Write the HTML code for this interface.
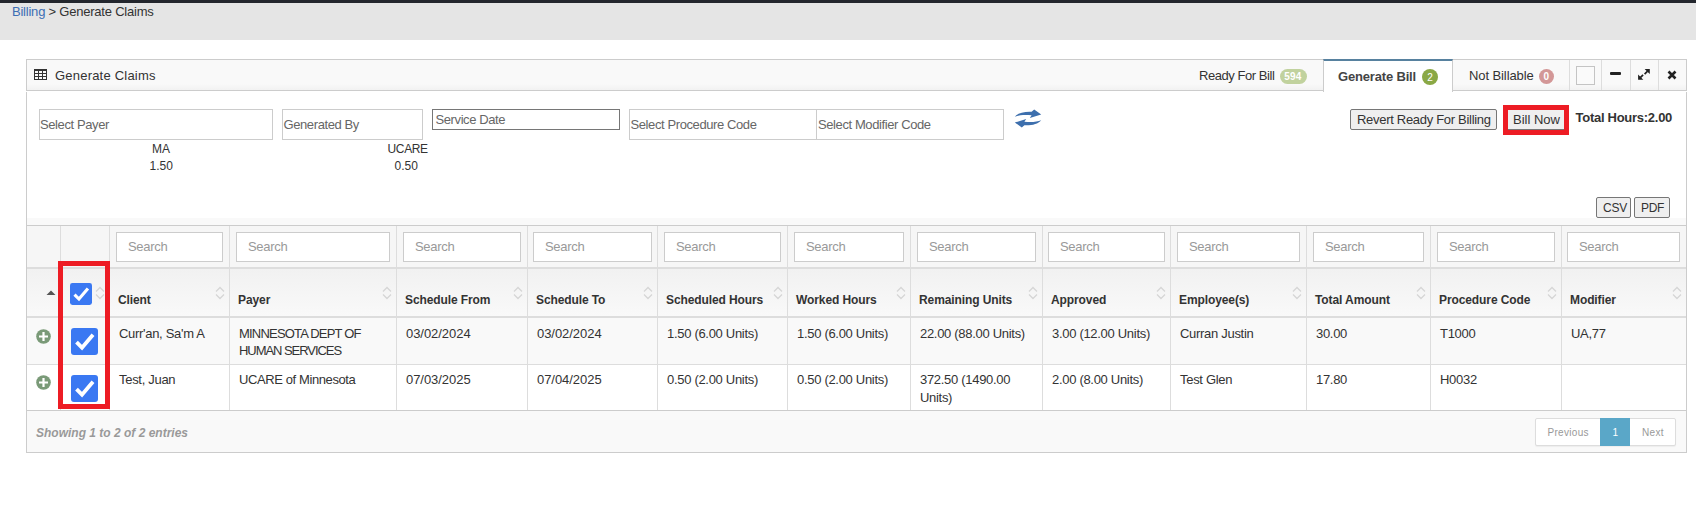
<!DOCTYPE html>
<html><head><meta charset="utf-8"><title>Generate Claims</title>
<style>
html,body{margin:0;padding:0;background:#fff;width:1696px;height:511px;overflow:hidden}
body{position:relative;font-family:"Liberation Sans",sans-serif}
.t{position:absolute;white-space:nowrap;line-height:20px}
.r{position:absolute}
</style></head><body>
<div class="r" style="left:0px;top:0px;width:1696px;height:3px;background:#23262d"></div>
<div class="r" style="left:0px;top:3px;width:1696px;height:37px;background:#e5e5e5"></div>
<div class="t" style="left:12px;top:1.70px;font-size:13px;font-weight:normal;color:#333;letter-spacing:-0.22px;font-style:normal;"><span style="color:#3d6eb4">Billing</span> &gt; Generate Claims</div>
<div class="r" style="left:26px;top:59px;width:1661px;height:32px;background:#f9f9f9;border:1px solid #ccc;box-sizing:border-box;background-image:linear-gradient(#f9f9f9 0,#f9f9f9 80%,#f2f2f2 100%)"></div>
<svg class="r" style="left:34px;top:69px" width="13" height="11" viewBox="0 0 13 11"><rect x="0.5" y="0.5" width="12" height="10" fill="none" stroke="#333"/><rect x="0" y="0" width="13" height="2" fill="#333"/><path d="M4.5 2V11M8.5 2V11M0 4.5H13M0 7.5H13" stroke="#333" stroke-width="1"/></svg>
<div class="t" style="left:55px;top:66.30px;font-size:13px;font-weight:normal;color:#333;letter-spacing:0.21px;font-style:normal;">Generate Claims</div>
<div class="r" style="left:1323px;top:59px;width:130px;height:33px;background:#fff;border-left:1px solid #ccc;border-right:1px solid #ccc;border-top:2px solid #57819f;box-sizing:border-box"></div>
<div class="t" style="left:1199px;top:65.70px;font-size:13px;font-weight:normal;color:#333;letter-spacing:-0.45px;font-style:normal;">Ready For Bill</div>
<div class="r" style="left:1280px;top:69px;width:27px;height:15px;background:#c1d29e;border-radius:8px"></div>
<div class="t" style="left:1284.3px;top:66.69px;font-size:10px;font-weight:bold;color:#fff;letter-spacing:0.2px;font-style:normal;">594</div>
<div class="t" style="left:1338px;top:66.50px;font-size:13px;font-weight:bold;color:#444;letter-spacing:-0.17px;font-style:normal;">Generate Bill</div>
<div class="r" style="left:1422px;top:69px;width:16px;height:16px;background:#8aa845;border-radius:50%"></div>
<div class="t" style="left:1427.3px;top:67.69px;font-size:10px;font-weight:normal;color:#fff;letter-spacing:0px;font-style:normal;">2</div>
<div class="t" style="left:1469px;top:65.70px;font-size:13px;font-weight:normal;color:#333;letter-spacing:-0.09px;font-style:normal;">Not Billable</div>
<div class="r" style="left:1539px;top:69px;width:15px;height:15px;background:#d39797;border-radius:50%"></div>
<div class="t" style="left:1543.6px;top:66.69px;font-size:10px;font-weight:bold;color:#fff;letter-spacing:0px;font-style:normal;">0</div>
<div class="r" style="left:1569px;top:60px;width:1px;height:30px;background:#ddd"></div>
<div class="r" style="left:1601px;top:60px;width:1px;height:30px;background:#ddd"></div>
<div class="r" style="left:1630px;top:60px;width:1px;height:30px;background:#ddd"></div>
<div class="r" style="left:1658px;top:60px;width:1px;height:30px;background:#ddd"></div>
<div class="r" style="left:1576px;top:66px;width:19px;height:19px;border:1px solid #c4c4c4;box-sizing:border-box;background:#fafafa"></div>
<div class="r" style="left:1610px;top:72px;width:11px;height:3px;background:#222;border-radius:1px"></div>
<svg class="r" style="left:1637px;top:68px" width="14" height="13" viewBox="0 0 14 13"><path d="M7.6 0.9H12.8V6.1Z M1.1 6.6V11.8H6.3Z" fill="#222"/><path d="M10.6 3.1L7.6 6.1M3.3 9.6L6.1 6.8" stroke="#222" stroke-width="1.7"/></svg>
<svg class="r" style="left:1667px;top:70px" width="10" height="10" viewBox="0 0 10 10"><path d="M1.5 1.5L8.5 8.5M8.5 1.5L1.5 8.5" stroke="#222" stroke-width="2.6"/></svg>
<div class="r" style="left:26px;top:92px;width:1px;height:361px;background:#ccc"></div>
<div class="r" style="left:1686px;top:92px;width:1px;height:361px;background:#ccc"></div>
<div class="r" style="left:39px;top:109px;width:234px;height:31px;border:1px solid #ccc;box-sizing:border-box;background:#fff"></div>
<div class="t" style="left:40px;top:114.70px;font-size:13px;font-weight:normal;color:#666;letter-spacing:-0.4px;font-style:normal;">Select Payer</div>
<div class="r" style="left:282px;top:109px;width:141px;height:31px;border:1px solid #ccc;box-sizing:border-box;background:#fff"></div>
<div class="t" style="left:283.5px;top:114.70px;font-size:13px;font-weight:normal;color:#666;letter-spacing:-0.4px;font-style:normal;">Generated By</div>
<div class="r" style="left:432px;top:109px;width:188px;height:21px;border:1px solid #767676;box-sizing:border-box;background:#fff"></div>
<div class="t" style="left:435.5px;top:109.70px;font-size:13px;font-weight:normal;color:#666;letter-spacing:-0.4px;font-style:normal;">Service Date</div>
<div class="r" style="left:629px;top:109px;width:188px;height:31px;border:1px solid #ccc;box-sizing:border-box;background:#fff"></div>
<div class="t" style="left:630.5px;top:115.20px;font-size:13px;font-weight:normal;color:#666;letter-spacing:-0.4px;font-style:normal;">Select Procedure Code</div>
<div class="r" style="left:816px;top:109px;width:188px;height:31px;border:1px solid #ccc;box-sizing:border-box;background:#fff"></div>
<div class="t" style="left:818px;top:115.20px;font-size:13px;font-weight:normal;color:#666;letter-spacing:-0.4px;font-style:normal;">Select Modifier Code</div>
<svg class="r" style="left:1014px;top:109px" width="28" height="19" viewBox="0 0 28 19"><path d="M0.8 7.7C4 3.8 10 2.4 17.6 2.7L20.2 0.5L27.2 5.5L15.8 9L17.6 6.3C11 5.6 5 6 0.8 7.7Z" fill="#3d6fad"/><path d="M27.2 11.3C24 15.2 18 16.6 10.4 16.3L7.8 18.5L0.8 13.5L12.2 10L10.4 12.7C17 13.4 23 13 27.2 11.3Z" fill="#3d6fad"/></svg>
<div class="t" style="left:152px;top:139.03px;font-size:12px;font-weight:normal;color:#333;letter-spacing:0px;font-style:normal;">MA</div>
<div class="t" style="left:149.5px;top:156.33px;font-size:12px;font-weight:normal;color:#333;letter-spacing:0px;font-style:normal;">1.50</div>
<div class="t" style="left:387.5px;top:139.03px;font-size:12px;font-weight:normal;color:#333;letter-spacing:-0.35px;font-style:normal;">UCARE</div>
<div class="t" style="left:394.5px;top:156.33px;font-size:12px;font-weight:normal;color:#333;letter-spacing:0px;font-style:normal;">0.50</div>
<div class="r" style="left:1350px;top:109px;width:147px;height:21px;background:#efefef;border:1px solid #767676;border-radius:2px;box-sizing:border-box"></div>
<div class="t" style="left:1357px;top:110.10px;font-size:13px;font-weight:normal;color:#333;letter-spacing:-0.3px;font-style:normal;">Revert Ready For Billing</div>
<div class="r" style="left:1503px;top:105px;width:66px;height:30px;background:#ed1c24"></div>
<div class="r" style="left:1508px;top:110px;width:56px;height:20px;background:#efefef;border-bottom:1px solid #767676;box-sizing:border-box"></div>
<div class="t" style="left:1513px;top:109.70px;font-size:13px;font-weight:normal;color:#333;letter-spacing:0px;font-style:normal;">Bill Now</div>
<div class="t" style="left:1575.5px;top:107.70px;font-size:13px;font-weight:bold;color:#333;letter-spacing:-0.27px;font-style:normal;">Total Hours:2.00</div>
<div class="r" style="left:1596px;top:197px;width:35px;height:21px;background:#efefef;border:1px solid #767676;border-radius:2px;box-sizing:border-box"></div>
<div class="t" style="left:1603px;top:198.03px;font-size:12px;font-weight:normal;color:#333;letter-spacing:-0.2px;font-style:normal;">CSV</div>
<div class="r" style="left:1634px;top:197px;width:36px;height:21px;background:#efefef;border:1px solid #767676;border-radius:2px;box-sizing:border-box"></div>
<div class="t" style="left:1641px;top:198.03px;font-size:12px;font-weight:normal;color:#333;letter-spacing:-0.3px;font-style:normal;">PDF</div>
<div class="r" style="left:27px;top:218px;width:1659px;height:7px;background:#f9f9f9"></div>
<div class="r" style="left:27px;top:226px;width:1659px;height:41px;background:#f6f6f6"></div>
<div class="r" style="left:27px;top:267px;width:1659px;height:2px;background:#ddd"></div>
<div class="r" style="left:27px;top:269px;width:1659px;height:47px;background:linear-gradient(#f1f1f1,#f9f9f9)"></div>
<div class="r" style="left:27px;top:316px;width:1659px;height:2px;background:#ddd"></div>
<div class="r" style="left:27px;top:318px;width:1659px;height:46px;background:#f9f9f9"></div>
<div class="r" style="left:27px;top:364px;width:1659px;height:1px;background:#ddd"></div>
<div class="r" style="left:27px;top:365px;width:1659px;height:45px;background:#fff"></div>
<div class="r" style="left:26px;top:225px;width:1661px;height:1px;background:#ccc"></div>
<div class="r" style="left:26px;top:410px;width:1661px;height:1px;background:#ccc"></div>
<div class="r" style="left:60px;top:226px;width:1px;height:184px;background:#ddd"></div>
<div class="r" style="left:109px;top:226px;width:1px;height:184px;background:#ddd"></div>
<div class="r" style="left:229px;top:226px;width:1px;height:184px;background:#ddd"></div>
<div class="r" style="left:396px;top:226px;width:1px;height:184px;background:#ddd"></div>
<div class="r" style="left:527px;top:226px;width:1px;height:184px;background:#ddd"></div>
<div class="r" style="left:657px;top:226px;width:1px;height:184px;background:#ddd"></div>
<div class="r" style="left:787px;top:226px;width:1px;height:184px;background:#ddd"></div>
<div class="r" style="left:910px;top:226px;width:1px;height:184px;background:#ddd"></div>
<div class="r" style="left:1042px;top:226px;width:1px;height:184px;background:#ddd"></div>
<div class="r" style="left:1170px;top:226px;width:1px;height:184px;background:#ddd"></div>
<div class="r" style="left:1306px;top:226px;width:1px;height:184px;background:#ddd"></div>
<div class="r" style="left:1430px;top:226px;width:1px;height:184px;background:#ddd"></div>
<div class="r" style="left:1561px;top:226px;width:1px;height:184px;background:#ddd"></div>
<div class="r" style="left:116px;top:232px;width:107px;height:30px;background:#fff;border:1px solid #ccc;box-sizing:border-box"></div>
<div class="t" style="left:128px;top:236.70px;font-size:13px;font-weight:normal;color:#999;letter-spacing:-0.3px;font-style:normal;">Search</div>
<div class="r" style="left:236px;top:232px;width:154px;height:30px;background:#fff;border:1px solid #ccc;box-sizing:border-box"></div>
<div class="t" style="left:248px;top:236.70px;font-size:13px;font-weight:normal;color:#999;letter-spacing:-0.3px;font-style:normal;">Search</div>
<div class="r" style="left:403px;top:232px;width:118px;height:30px;background:#fff;border:1px solid #ccc;box-sizing:border-box"></div>
<div class="t" style="left:415px;top:236.70px;font-size:13px;font-weight:normal;color:#999;letter-spacing:-0.3px;font-style:normal;">Search</div>
<div class="r" style="left:533px;top:232px;width:119px;height:30px;background:#fff;border:1px solid #ccc;box-sizing:border-box"></div>
<div class="t" style="left:545px;top:236.70px;font-size:13px;font-weight:normal;color:#999;letter-spacing:-0.3px;font-style:normal;">Search</div>
<div class="r" style="left:664px;top:232px;width:117px;height:30px;background:#fff;border:1px solid #ccc;box-sizing:border-box"></div>
<div class="t" style="left:676px;top:236.70px;font-size:13px;font-weight:normal;color:#999;letter-spacing:-0.3px;font-style:normal;">Search</div>
<div class="r" style="left:794px;top:232px;width:110px;height:30px;background:#fff;border:1px solid #ccc;box-sizing:border-box"></div>
<div class="t" style="left:806px;top:236.70px;font-size:13px;font-weight:normal;color:#999;letter-spacing:-0.3px;font-style:normal;">Search</div>
<div class="r" style="left:917px;top:232px;width:119px;height:30px;background:#fff;border:1px solid #ccc;box-sizing:border-box"></div>
<div class="t" style="left:929px;top:236.70px;font-size:13px;font-weight:normal;color:#999;letter-spacing:-0.3px;font-style:normal;">Search</div>
<div class="r" style="left:1048px;top:232px;width:117px;height:30px;background:#fff;border:1px solid #ccc;box-sizing:border-box"></div>
<div class="t" style="left:1060px;top:236.70px;font-size:13px;font-weight:normal;color:#999;letter-spacing:-0.3px;font-style:normal;">Search</div>
<div class="r" style="left:1177px;top:232px;width:123px;height:30px;background:#fff;border:1px solid #ccc;box-sizing:border-box"></div>
<div class="t" style="left:1189px;top:236.70px;font-size:13px;font-weight:normal;color:#999;letter-spacing:-0.3px;font-style:normal;">Search</div>
<div class="r" style="left:1313px;top:232px;width:111px;height:30px;background:#fff;border:1px solid #ccc;box-sizing:border-box"></div>
<div class="t" style="left:1325px;top:236.70px;font-size:13px;font-weight:normal;color:#999;letter-spacing:-0.3px;font-style:normal;">Search</div>
<div class="r" style="left:1437px;top:232px;width:118px;height:30px;background:#fff;border:1px solid #ccc;box-sizing:border-box"></div>
<div class="t" style="left:1449px;top:236.70px;font-size:13px;font-weight:normal;color:#999;letter-spacing:-0.3px;font-style:normal;">Search</div>
<div class="r" style="left:1567px;top:232px;width:113px;height:30px;background:#fff;border:1px solid #ccc;box-sizing:border-box"></div>
<div class="t" style="left:1579px;top:236.70px;font-size:13px;font-weight:normal;color:#999;letter-spacing:-0.3px;font-style:normal;">Search</div>
<div class="t" style="left:118px;top:290.03px;font-size:12px;font-weight:bold;color:#333;letter-spacing:-0.1px;font-style:normal;">Client</div>
<svg class="r" style="left:215px;top:286px" width="10" height="14" viewBox="0 0 10 14"><path d="M1 5.5L5 1.5L9 5.5M1 8.5L5 12.5L9 8.5" fill="none" stroke="#d6d6d6" stroke-width="1.4"/></svg>
<div class="t" style="left:238px;top:290.03px;font-size:12px;font-weight:bold;color:#333;letter-spacing:-0.1px;font-style:normal;">Payer</div>
<svg class="r" style="left:382px;top:286px" width="10" height="14" viewBox="0 0 10 14"><path d="M1 5.5L5 1.5L9 5.5M1 8.5L5 12.5L9 8.5" fill="none" stroke="#d6d6d6" stroke-width="1.4"/></svg>
<div class="t" style="left:405px;top:290.03px;font-size:12px;font-weight:bold;color:#333;letter-spacing:-0.1px;font-style:normal;">Schedule From</div>
<svg class="r" style="left:513px;top:286px" width="10" height="14" viewBox="0 0 10 14"><path d="M1 5.5L5 1.5L9 5.5M1 8.5L5 12.5L9 8.5" fill="none" stroke="#d6d6d6" stroke-width="1.4"/></svg>
<div class="t" style="left:536px;top:290.03px;font-size:12px;font-weight:bold;color:#333;letter-spacing:-0.1px;font-style:normal;">Schedule To</div>
<svg class="r" style="left:643px;top:286px" width="10" height="14" viewBox="0 0 10 14"><path d="M1 5.5L5 1.5L9 5.5M1 8.5L5 12.5L9 8.5" fill="none" stroke="#d6d6d6" stroke-width="1.4"/></svg>
<div class="t" style="left:666px;top:290.03px;font-size:12px;font-weight:bold;color:#333;letter-spacing:-0.1px;font-style:normal;">Scheduled Hours</div>
<svg class="r" style="left:773px;top:286px" width="10" height="14" viewBox="0 0 10 14"><path d="M1 5.5L5 1.5L9 5.5M1 8.5L5 12.5L9 8.5" fill="none" stroke="#d6d6d6" stroke-width="1.4"/></svg>
<div class="t" style="left:796px;top:290.03px;font-size:12px;font-weight:bold;color:#333;letter-spacing:-0.1px;font-style:normal;">Worked Hours</div>
<svg class="r" style="left:896px;top:286px" width="10" height="14" viewBox="0 0 10 14"><path d="M1 5.5L5 1.5L9 5.5M1 8.5L5 12.5L9 8.5" fill="none" stroke="#d6d6d6" stroke-width="1.4"/></svg>
<div class="t" style="left:919px;top:290.03px;font-size:12px;font-weight:bold;color:#333;letter-spacing:-0.1px;font-style:normal;">Remaining Units</div>
<svg class="r" style="left:1028px;top:286px" width="10" height="14" viewBox="0 0 10 14"><path d="M1 5.5L5 1.5L9 5.5M1 8.5L5 12.5L9 8.5" fill="none" stroke="#d6d6d6" stroke-width="1.4"/></svg>
<div class="t" style="left:1051px;top:290.03px;font-size:12px;font-weight:bold;color:#333;letter-spacing:-0.1px;font-style:normal;">Approved</div>
<svg class="r" style="left:1156px;top:286px" width="10" height="14" viewBox="0 0 10 14"><path d="M1 5.5L5 1.5L9 5.5M1 8.5L5 12.5L9 8.5" fill="none" stroke="#d6d6d6" stroke-width="1.4"/></svg>
<div class="t" style="left:1179px;top:290.03px;font-size:12px;font-weight:bold;color:#333;letter-spacing:-0.1px;font-style:normal;">Employee(s)</div>
<svg class="r" style="left:1292px;top:286px" width="10" height="14" viewBox="0 0 10 14"><path d="M1 5.5L5 1.5L9 5.5M1 8.5L5 12.5L9 8.5" fill="none" stroke="#d6d6d6" stroke-width="1.4"/></svg>
<div class="t" style="left:1315px;top:290.03px;font-size:12px;font-weight:bold;color:#333;letter-spacing:-0.1px;font-style:normal;">Total Amount</div>
<svg class="r" style="left:1416px;top:286px" width="10" height="14" viewBox="0 0 10 14"><path d="M1 5.5L5 1.5L9 5.5M1 8.5L5 12.5L9 8.5" fill="none" stroke="#d6d6d6" stroke-width="1.4"/></svg>
<div class="t" style="left:1439px;top:290.03px;font-size:12px;font-weight:bold;color:#333;letter-spacing:-0.1px;font-style:normal;">Procedure Code</div>
<svg class="r" style="left:1547px;top:286px" width="10" height="14" viewBox="0 0 10 14"><path d="M1 5.5L5 1.5L9 5.5M1 8.5L5 12.5L9 8.5" fill="none" stroke="#d6d6d6" stroke-width="1.4"/></svg>
<div class="t" style="left:1570px;top:290.03px;font-size:12px;font-weight:bold;color:#333;letter-spacing:-0.1px;font-style:normal;">Modifier</div>
<svg class="r" style="left:1672px;top:286px" width="10" height="14" viewBox="0 0 10 14"><path d="M1 5.5L5 1.5L9 5.5M1 8.5L5 12.5L9 8.5" fill="none" stroke="#d6d6d6" stroke-width="1.4"/></svg>
<svg class="r" style="left:95px;top:286px" width="10" height="14" viewBox="0 0 10 14"><path d="M1 5.5L5 1.5L9 5.5M1 8.5L5 12.5L9 8.5" fill="none" stroke="#d6d6d6" stroke-width="1.4"/></svg>
<svg class="r" style="left:46px;top:290px" width="10" height="5" viewBox="0 0 10 5"><path d="M0.5 5L5 0.5L9.5 5Z" fill="#555"/></svg>
<svg class="r" style="left:70px;top:283px" width="22" height="22" viewBox="0 0 27 27"><rect width="27" height="27" rx="3" fill="#3a78f2"/><path d="M5.5 14.2L11 19.7L22 6.8" fill="none" stroke="#fff" stroke-width="3.8"/></svg>
<svg class="r" style="left:71px;top:328px" width="27" height="27" viewBox="0 0 27 27"><rect width="27" height="27" rx="3" fill="#3a78f2"/><path d="M5.5 14.2L11 19.7L22 6.8" fill="none" stroke="#fff" stroke-width="3.8"/></svg>
<svg class="r" style="left:71px;top:375px" width="27" height="27" viewBox="0 0 27 27"><rect width="27" height="27" rx="3" fill="#3a78f2"/><path d="M5.5 14.2L11 19.7L22 6.8" fill="none" stroke="#fff" stroke-width="3.8"/></svg>
<svg class="r" style="left:35.6px;top:329.3px" width="15" height="15" viewBox="0 0 15 15"><circle cx="7.5" cy="7.5" r="7.3" fill="#7a9a78"/><path d="M7.5 3V12M3 7.5H12" stroke="#fff" stroke-width="2.2"/></svg>
<svg class="r" style="left:35.6px;top:375.3px" width="15" height="15" viewBox="0 0 15 15"><circle cx="7.5" cy="7.5" r="7.3" fill="#7a9a78"/><path d="M7.5 3V12M3 7.5H12" stroke="#fff" stroke-width="2.2"/></svg>
<div class="t" style="left:119px;top:323.70px;font-size:13px;font-weight:normal;color:#333;letter-spacing:-0.3px;font-style:normal;">Curr'an, Sa'm A</div>
<div class="t" style="left:406px;top:323.70px;font-size:13px;font-weight:normal;color:#333;letter-spacing:-0.05px;font-style:normal;">03/02/2024</div>
<div class="t" style="left:537px;top:323.70px;font-size:13px;font-weight:normal;color:#333;letter-spacing:-0.05px;font-style:normal;">03/02/2024</div>
<div class="t" style="left:667px;top:323.70px;font-size:13px;font-weight:normal;color:#333;letter-spacing:-0.3px;font-style:normal;">1.50 (6.00 Units)</div>
<div class="t" style="left:797px;top:323.70px;font-size:13px;font-weight:normal;color:#333;letter-spacing:-0.3px;font-style:normal;">1.50 (6.00 Units)</div>
<div class="t" style="left:920px;top:323.70px;font-size:13px;font-weight:normal;color:#333;letter-spacing:-0.3px;font-style:normal;">22.00 (88.00 Units)</div>
<div class="t" style="left:1052px;top:323.70px;font-size:13px;font-weight:normal;color:#333;letter-spacing:-0.3px;font-style:normal;">3.00 (12.00 Units)</div>
<div class="t" style="left:1180px;top:323.70px;font-size:13px;font-weight:normal;color:#333;letter-spacing:-0.3px;font-style:normal;">Curran Justin</div>
<div class="t" style="left:1316px;top:323.70px;font-size:13px;font-weight:normal;color:#333;letter-spacing:-0.3px;font-style:normal;">30.00</div>
<div class="t" style="left:1440px;top:323.70px;font-size:13px;font-weight:normal;color:#333;letter-spacing:-0.3px;font-style:normal;">T1000</div>
<div class="t" style="left:1571px;top:323.70px;font-size:13px;font-weight:normal;color:#333;letter-spacing:-0.3px;font-style:normal;">UA,77</div>
<div class="t" style="left:119px;top:369.70px;font-size:13px;font-weight:normal;color:#333;letter-spacing:-0.3px;font-style:normal;">Test, Juan</div>
<div class="t" style="left:239px;top:369.70px;font-size:13px;font-weight:normal;color:#333;letter-spacing:-0.4px;font-style:normal;">UCARE of Minnesota</div>
<div class="t" style="left:406px;top:369.70px;font-size:13px;font-weight:normal;color:#333;letter-spacing:-0.05px;font-style:normal;">07/03/2025</div>
<div class="t" style="left:537px;top:369.70px;font-size:13px;font-weight:normal;color:#333;letter-spacing:-0.05px;font-style:normal;">07/04/2025</div>
<div class="t" style="left:667px;top:369.70px;font-size:13px;font-weight:normal;color:#333;letter-spacing:-0.3px;font-style:normal;">0.50 (2.00 Units)</div>
<div class="t" style="left:797px;top:369.70px;font-size:13px;font-weight:normal;color:#333;letter-spacing:-0.3px;font-style:normal;">0.50 (2.00 Units)</div>
<div class="t" style="left:1052px;top:369.70px;font-size:13px;font-weight:normal;color:#333;letter-spacing:-0.3px;font-style:normal;">2.00 (8.00 Units)</div>
<div class="t" style="left:1180px;top:369.70px;font-size:13px;font-weight:normal;color:#333;letter-spacing:-0.3px;font-style:normal;">Test Glen</div>
<div class="t" style="left:1316px;top:369.70px;font-size:13px;font-weight:normal;color:#333;letter-spacing:-0.3px;font-style:normal;">17.80</div>
<div class="t" style="left:1440px;top:369.70px;font-size:13px;font-weight:normal;color:#333;letter-spacing:-0.3px;font-style:normal;">H0032</div>
<div class="t" style="left:239px;top:323.70px;font-size:13px;font-weight:normal;color:#333;letter-spacing:-0.8px;font-style:normal;">MINNESOTA DEPT OF</div>
<div class="t" style="left:239px;top:340.70px;font-size:13px;font-weight:normal;color:#333;letter-spacing:-1.05px;font-style:normal;">HUMAN SERVICES</div>
<div class="t" style="left:920px;top:369.70px;font-size:13px;font-weight:normal;color:#333;letter-spacing:-0.3px;font-style:normal;">372.50 (1490.00</div>
<div class="t" style="left:920px;top:387.70px;font-size:13px;font-weight:normal;color:#333;letter-spacing:-0.3px;font-style:normal;">Units)</div>
<div class="r" style="left:58px;top:261px;width:52px;height:148px;border:5px solid #ed1c24;box-sizing:border-box"></div>
<div class="r" style="left:27px;top:411px;width:1659px;height:41px;background:#f9f9f9"></div>
<div class="r" style="left:26px;top:452px;width:1661px;height:1px;background:#ccc"></div>
<div class="t" style="left:36px;top:423.03px;font-size:12px;font-weight:bold;color:#999;letter-spacing:0px;font-style:italic;">Showing 1 to 2 of 2 entries</div>
<div class="r" style="left:1535px;top:418px;width:141px;height:28px;background:#fff;border:1px solid #ddd;border-radius:2px;box-sizing:border-box;box-shadow:0 1px 1px rgba(0,0,0,.05)"></div>
<div class="r" style="left:1600px;top:418px;width:30px;height:28px;background:#5aa7c8"></div>
<div class="t" style="left:1547.5px;top:423.39px;font-size:10px;font-weight:normal;color:#999;letter-spacing:0.3px;font-style:normal;">Previous</div>
<div class="t" style="left:1612.5px;top:423.39px;font-size:10px;font-weight:normal;color:#fff;letter-spacing:0px;font-style:normal;">1</div>
<div class="t" style="left:1642px;top:423.39px;font-size:10px;font-weight:normal;color:#999;letter-spacing:0.3px;font-style:normal;">Next</div>
</body></html>
